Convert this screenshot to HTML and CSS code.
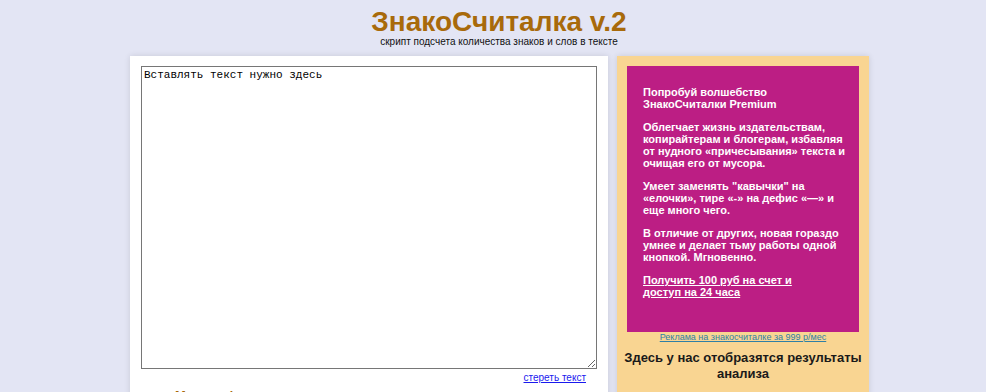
FILE: index.html
```html
<!DOCTYPE html>
<html lang="ru">
<head>
    <meta charset="UTF-8">
    <meta name="viewport" content="width=device-width, initial-scale=1.0">
    <title>ЗнакоСчиталка v.2</title>
    <link rel="stylesheet" href="styles.css">
</head>
<body>
    <div class="header">
        <h1>ЗнакоСчиталка v.2</h1>
        <p class="subtitle">скрипт подсчета количества знаков и слов в тексте</p>
    </div>

    <div class="wrap">
        <div class="card main">
            <textarea id="text">Вставлять текст нужно здесь</textarea>
            <div class="clear-row"><a href="#" class="clear">стереть текст</a></div>
            <h3 class="options">Многие функции</h3>
        </div>

        <div class="card side">
            <div class="promo">
                <p>Попробуй волшебство<br>ЗнакоСчиталки Premium</p>
                <p>Облегчает жизнь издательствам, копирайтерам и блогерам, избавляя от нудного «причесывания» текста и очищая его от мусора.</p>
                <p>Умеет заменять "кавычки" на «елочки», тире «-» на дефис «—» и еще много чего.</p>
                <p>В отличие от других, новая гораздо умнее и делает тьму работы одной кнопкой. Мгновенно.</p>
                <p><a href="#">Получить 100 руб на счет и<br>доступ на 24 часа</a></p>
            </div>
            <a href="#" class="ad">Реклама на знакосчиталке за 999 р/мес</a>
            <p class="result">Здесь у нас отобразятся результаты анализа</p>
        </div>
    </div>
</body>
</html>
```

FILE: styles.css
```css
body {
    margin: 0;
    background: #e3e5f4;
    font-family: "Liberation Sans", Arial, sans-serif;
    color: #222;
}
.header {
    text-align: center;
    padding-top: 7px;
    margin-left: 12px;
}
h1 {
    margin: 0;
    font-size: 28px;
    line-height: 29px;
    color: #a86a0b;
}
.subtitle {
    margin: 0;
    font-size: 10px;
    color: #111;
}
.wrap {
    display: flex;
    gap: 9px;
    width: 740px;
    margin: 9px 0 0 calc(50% - 363px);
}
.card {
    box-shadow: 0 0 6px rgba(0, 0, 0, 0.12);
}
.main {
    width: 478px;
    background: #fff;
    padding-top: 10px;
}
textarea {
    display: block;
    box-sizing: border-box;
    width: 456px;
    height: 303px;
    margin-left: 11px;
    padding: 2px;
    border: 1px solid #767676;
    font-family: "Liberation Mono", "Courier New", monospace;
    font-size: 11px;
    color: #000;
}
.clear-row {
    text-align: right;
    padding: 3px 22px 0 0;
    font-size: 10px;
}
.clear {
    color: #1a1aee;
}
.options {
    margin: 5px 0 0 45px;
    font-size: 13px;
    color: #a86a0b;
}
.side {
    width: 252px;
    box-sizing: border-box;
    background: #f9d592;
    padding: 10px;
    text-align: center;
}
.promo {
    background: #bc1e84;
    color: #fff;
    text-align: left;
    font-size: 11px;
    font-weight: bold;
    line-height: 12px;
    padding: 20px 10px 34px 16px;
}
.promo p {
    margin: 0 0 11px;
}
.promo p:last-child {
    margin-bottom: 0;
}
.promo a {
    color: #fff;
}
.ad {
    display: block;
    font-size: 9px;
    color: #2f7fa6;
}
.result {
    margin: 8px -5px 0;
    font-size: 13px;
    line-height: 16px;
    font-weight: bold;
    color: #1a1a1a;
}
```
